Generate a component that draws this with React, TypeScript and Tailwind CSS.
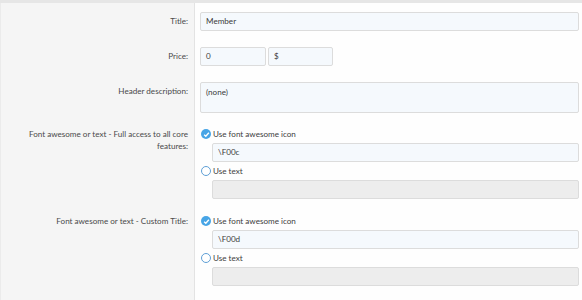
import { FC, ReactNode } from "react";

const font = { fontFamily: 'Lato, "Open Sans", sans-serif' };

const Radio: FC<{ checked?: boolean; label: string }> = ({ checked, label }) => (
	<div className="flex items-center h-[16px] pl-[1px]">
		{checked ? (
			<span className="w-[10px] h-[10px] rounded-full bg-[#47a5e6] flex items-center justify-center">
				<svg width="7" height="7" viewBox="0 0 8 8">
					<path d="M1.3 4.2 L3.2 6 L6.7 2" fill="none" stroke="#fff" strokeWidth="1.5" />
				</svg>
			</span>
		) : (
			<span className="w-[10px] h-[10px] rounded-full border-[1.5px] border-[#5e9fd6] bg-white" />
		)}
		<span className="ml-[2px] text-[8.1px] text-[#404040]">{label}</span>
	</div>
);

const Row: FC<{ label: ReactNode; pt: string; labelCls?: string; children: ReactNode }> = ({ label, pt, labelCls, children }) => (
	<div className="flex">
		<div className={`w-[194px] shrink-0 bg-[#f5f5f5] border-r border-[#e3e3e3] text-right pr-[6px] text-[8.1px] text-[#4a4a4a] ${pt}`}>
			<div className={labelCls}>{label}</div>
		</div>
		<div className={`flex-1 pl-[5px] pr-[3px] ${pt}`}>{children}</div>
	</div>
);

const inputCls = "h-[19px] border border-[#dcdcdc] rounded-[2px] bg-[#f5f9fd] px-[5px] text-[8.1px] text-[#3a3a3a] flex items-center";

const IconGroup: FC<{ value: string }> = ({ value }) => (
	<div className="flex flex-col">
		<Radio checked label="Use font awesome icon" />
		<div className="pl-[12px] mt-[1px]">
			<div className={inputCls}>{value}</div>
		</div>
		<div className="mt-[1px]">
			<Radio label="Use text" />
		</div>
		<div className="pl-[12px] mt-[1px]">
			<div className="h-[19px] border border-[#dcdcdc] rounded-[2px] bg-[#ededed]" />
		</div>
	</div>
);

const App: FC = () => {
	return (
		<div className="w-[582px] h-[300px] bg-[#fefefe] overflow-hidden" style={font}>
			<div className="h-[3px] bg-[#e6e6e6]" />
			<div className="border-l border-[#ebebeb] h-[297px] flex flex-col">
				<Row label="Title:" pt="pt-[9px]" labelCls="leading-[19px]">
					<div className={inputCls}>Member</div>
				</Row>
				<Row label="Price:" pt="pt-[16px]" labelCls="leading-[19px]">
					<div className="flex gap-[2px]">
						<div className={`${inputCls} w-[66px]`}>0</div>
						<div className={`${inputCls} w-[65px]`}>$</div>
					</div>
				</Row>
				<Row label="Header description:" pt="pt-[16px]" labelCls="leading-[19px]">
					<div className="h-[31px] border border-[#dcdcdc] rounded-[2px] bg-[#f5f9fd] px-[5px] pt-[3px] text-[8.1px] text-[#3a3a3a]">
						(none)
					</div>
				</Row>
				<Row
					label={<>Font awesome or text - Full access to all core<br />features:</>}
					pt="pt-[13px]"
					labelCls="leading-[12px] pt-[2px]"
				>
					<IconGroup value="\F00c" />
				</Row>
				<Row label="Font awesome or text - Custom Title:" pt="pt-[14px]" labelCls="leading-[16px]">
					<IconGroup value="\F00d" />
				</Row>
				<div className="flex flex-1">
					<div className="w-[194px] bg-[#f5f5f5] border-r border-[#e3e3e3]" />
				</div>
			</div>
		</div>
	);
};

export default App;
